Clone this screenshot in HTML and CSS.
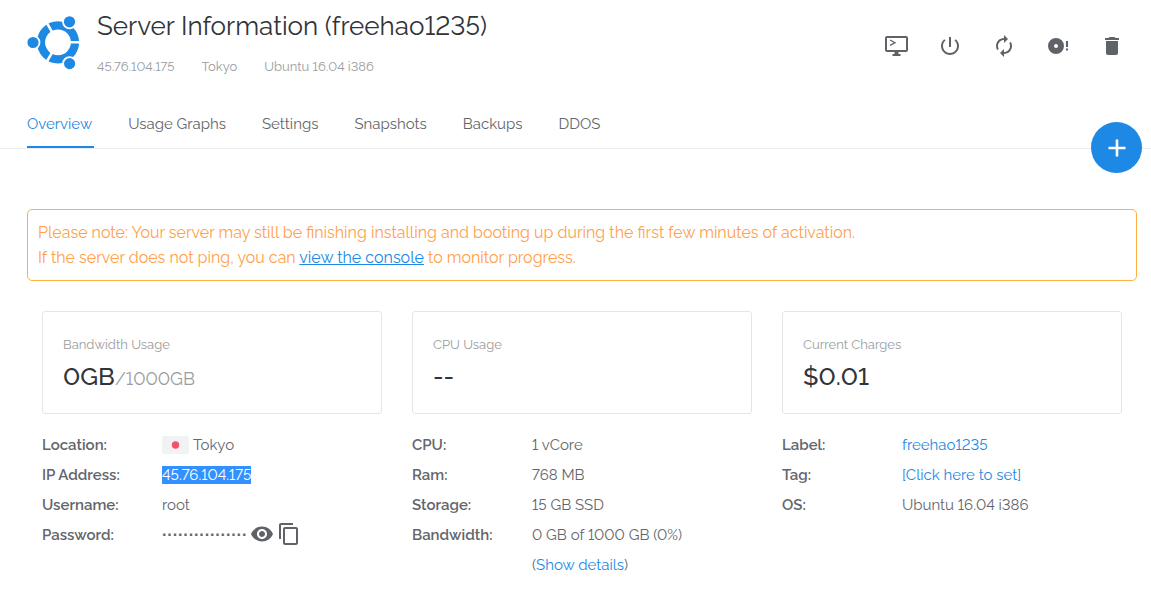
FILE: index.html
```html
<!DOCTYPE html>
<html lang="en">
<head>
<meta charset="utf-8">
<meta name="viewport" content="width=device-width, initial-scale=1">
<title>Server Information</title>
<link rel="stylesheet" href="styles.css">
</head>
<body>
<header class="header">
  <svg class="logo" viewBox="0 0 53 55" aria-hidden="true">
    <circle cx="31" cy="27.3" r="17" fill="none" stroke="#1e88e5" stroke-width="8.2"/>
    <path d="M31 27.3H54M31 27.3L19.5 7.4M31 27.3L19.5 47.2" stroke="#fff" stroke-width="2.6"/>
    <g fill="#1e88e5" stroke="#fff" stroke-width="1.8">
      <circle cx="6" cy="27.5" r="6.5"/>
      <circle cx="42.5" cy="6.8" r="6.5"/>
      <circle cx="42.6" cy="48.6" r="6.5"/>
    </g>
  </svg>
  <div class="heading">
    <h1 class="title">Server Information (freehao1235)</h1>
    <div class="meta"><span>45.76.104.175</span><span>Tokyo</span><span>Ubuntu 16.04 i386</span></div>
  </div>
  <div class="actions">
    <button class="action" type="button" aria-label="View console">
      <svg viewBox="0 0 24 24"><rect x="2" y="3" width="21" height="14" rx="1" fill="none" stroke="currentColor" stroke-width="2"/><path d="M8.500 20h8v2h-8zM10.500 17h4v4h-4z" fill="currentColor"/><path d="M6 6l5 2.700-5 2.700" fill="none" stroke="currentColor" stroke-width="1.300"/></svg>
    </button>
    <button class="action" type="button" aria-label="Stop server">
      <svg viewBox="0 0 24 24"><path fill="currentColor" d="M13 3h-2v10h2V3zm4.83 2.17l-1.42 1.42C17.99 7.86 19 9.81 19 12c0 3.87-3.13 7-7 7s-7-3.13-7-7c0-2.19 1.01-4.14 2.58-5.42L6.17 5.17C4.23 6.82 3 9.26 3 12c0 4.97 4.03 9 9 9s9-4.03 9-9c0-2.74-1.23-5.18-3.17-6.83z"/></svg>
    </button>
    <button class="action" type="button" aria-label="Restart server">
      <svg viewBox="0 0 24 24"><path fill="currentColor" d="M12 6v3l4-4-4-4v3c-4.42 0-8 3.58-8 8 0 1.57.46 3.03 1.24 4.26L6.7 14.8c-.45-.83-.7-1.79-.7-2.8 0-3.31 2.69-6 6-6zm6.76 1.74L17.3 9.2c.44.84.7 1.79.7 2.8 0 3.31-2.69 6-6 6v-3l-4 4 4 4v-3c4.42 0 8-3.58 8-8 0-1.57-.46-3.03-1.24-4.26z"/></svg>
    </button>
    <button class="action" type="button" aria-label="Reinstall server">
      <svg viewBox="0 0 24 24"><path fill="currentColor" fill-rule="evenodd" d="M10 4a8 8 0 1 0 0 16a8 8 0 1 0 0-16zM10 10a2 2 0 1 1 0 4a2 2 0 1 1 0-4zM20 7h2v6h-2zM20 14.500h2v2h-2z"/></svg>
    </button>
    <button class="action" type="button" aria-label="Destroy server">
      <svg viewBox="0 0 24 24"><path fill="currentColor" d="M6 19c0 1.100.9 2 2 2h8c1.100 0 2-.9 2-2V7H6v12zM19 4h-3.500l-1-1h-5l-1 1H5v2h14V4z"/></svg>
    </button>
  </div>
</header>
<nav class="tabs">
  <a class="tab tab-active" href="#overview">Overview</a>
  <a class="tab" href="#usage">Usage Graphs</a>
  <a class="tab" href="#settings">Settings</a>
  <a class="tab" href="#snapshots">Snapshots</a>
  <a class="tab" href="#backups">Backups</a>
  <a class="tab" href="#ddos">DDOS</a>
  <button class="fab" type="button" aria-label="Deploy new server">
    <svg viewBox="0 0 24 24"><path d="M12 3.500v17M3.500 12h17" stroke="currentColor" stroke-width="2.600"/></svg>
  </button>
</nav>
<main class="content">
  <div class="alert">Please note: Your server may still be finishing installing and booting up during the first few minutes of activation.<br>If the server does not ping, you can <a href="#console">view the console</a> to monitor progress.</div>
  <div class="columns">
    <section>
      <div class="card"><div class="card-label">Bandwidth Usage</div><div class="card-value">0GB<small>/1000GB</small></div></div>
      <dl class="details">
        <dt>Location:</dt><dd class="icon-row"><svg class="flag" viewBox="0 0 27 18"><rect width="27" height="18" rx="2" fill="#f1f2f4"/><circle cx="13.500" cy="9" r="3.700" fill="#f4516c"/></svg>Tokyo</dd>
        <dt>IP Address:</dt><dd><span class="selected">45.76.104.175</span></dd>
        <dt>Username:</dt><dd>root</dd>
        <dt>Password:</dt>
        <dd class="icon-row password"><span class="dots">················</span>
          <button class="mini" type="button" aria-label="Show password"><svg viewBox="0 0 24 24"><path fill="currentColor" d="M12 4.500C7 4.500 2.730 7.610 1 12c1.730 4.390 6 7.500 11 7.500s9.270-3.110 11-7.500c-1.730-4.390-6-7.500-11-7.500zM12 17c-2.760 0-5-2.240-5-5s2.240-5 5-5 5 2.240 5 5-2.240 5-5 5zm0-8c-1.660 0-3 1.340-3 3s1.340 3 3 3 3-1.340 3-3-1.340-3-3-3z"/></svg></button>
          <button class="mini" type="button" aria-label="Copy password"><svg viewBox="0 0 24 24"><path fill="currentColor" d="M16 1H4c-1.100 0-2 .9-2 2v14h2V3h12V1zm3 4H8c-1.100 0-2 .9-2 2v14c0 1.100.9 2 2 2h11c1.100 0 2-.9 2-2V7c0-1.100-.9-2-2-2zm0 16H8V7h11v14z"/></svg></button>
        </dd>
      </dl>
    </section>
    <section>
      <div class="card"><div class="card-label">CPU Usage</div><div class="card-value">--</div></div>
      <dl class="details">
        <dt>CPU:</dt><dd>1 vCore</dd>
        <dt>Ram:</dt><dd>768 MB</dd>
        <dt>Storage:</dt><dd>15 GB SSD</dd>
        <dt>Bandwidth:</dt><dd>0 GB of 1000 GB (0%)<br>(<a href="#details">Show details</a>)</dd>
      </dl>
    </section>
    <section>
      <div class="card"><div class="card-label">Current Charges</div><div class="card-value">$0.01</div></div>
      <dl class="details">
        <dt>Label:</dt><dd><a href="#label">freehao1235</a></dd>
        <dt>Tag:</dt><dd><a href="#tag">[Click here to set]</a></dd>
        <dt>OS:</dt><dd>Ubuntu 16.04 i386</dd>
      </dl>
    </section>
  </div>
</main>
</body>
</html>
```

FILE: styles.css
```css
* { box-sizing: border-box; }
body {
  margin: 0;
  background: #fff;
  color: #63666b;
  font: 400 15px/30px Raleway, Lato, "Open Sans", sans-serif;
  font-variant-numeric: lining-nums;
}
a { color: #1e88e5; text-decoration: none; }
button { padding: 0; border: 0; background: none; color: #5f6368; cursor: pointer; }
svg { display: block; }

.header { display: flex; align-items: flex-start; padding: 8px 27px 0; }
.logo { width: 53px; height: 55px; margin: 7px 17px 0 0; flex: none; }
.heading { flex: 1; }
.title { margin: 0 0 13px; font-size: 26px; line-height: 36px; font-weight: 450; color: #30353a; }
.meta { display: flex; gap: 27px; font-size: 13px; line-height: 20px; color: #9a9da1; }
.actions { display: flex; gap: 30px; padding-top: 26px; }
.action svg { width: 24px; height: 24px; }

.tabs {
  position: relative;
  display: flex;
  gap: 34px;
  padding: 23px 27px 0;
  border-bottom: 1px solid #e9ebf2;
}
.tab { padding: 9px 2px 7px 0; border-bottom: 2px solid transparent; color: #63666b; }
.tab-active { color: #1e88e5; border-color: #1e88e5; }
.fab {
  position: absolute;
  right: 9px;
  bottom: -25px;
  display: grid;
  place-items: center;
  width: 51px;
  height: 51px;
  border-radius: 50%;
  background: #1e88e5;
  color: #fff;
}
.fab svg { width: 24px; height: 24px; }

.content { padding: 60px 14px 20px 27px; }
.alert {
  padding: 10px;
  border: 1px solid #ffb040;
  border-radius: 5px;
  color: #ffa04a;
  font-size: 16px;
  line-height: 25px;
}
.alert a { text-decoration: underline; }
.columns {
  display: grid;
  grid-template-columns: repeat(3, 1fr);
  gap: 30px;
  padding: 30px 15px 0;
}
.card { padding: 23px 20px 16px; border: 1px solid #e5e6e8; border-radius: 3px; }
.card-label { font-size: 13px; line-height: 20px; color: #9a9da1; }
.card-value { line-height: 42px; font-size: 25px; font-weight: 500; color: #30353a; }
.card-value small { font-size: 18px; line-height: 1; font-weight: 400; color: #9a9da1; }

.details { display: grid; grid-template-columns: 120px 1fr; margin: 16px 0 0; }
.details dt { font-weight: 600; }
.details dd { margin: 0; }
.icon-row { display: flex; align-items: center; gap: 4px; }
.flag { width: 27px; height: 18px; }
.selected { background: #3390ff; color: #fff; }
.password { gap: 3px; height: 30px; }
.dots { font-family: "Liberation Sans", sans-serif; font-size: 16px; font-weight: 700; }
.mini { padding-bottom: 3px; }
.mini svg { width: 24px; height: 24px; }
```
